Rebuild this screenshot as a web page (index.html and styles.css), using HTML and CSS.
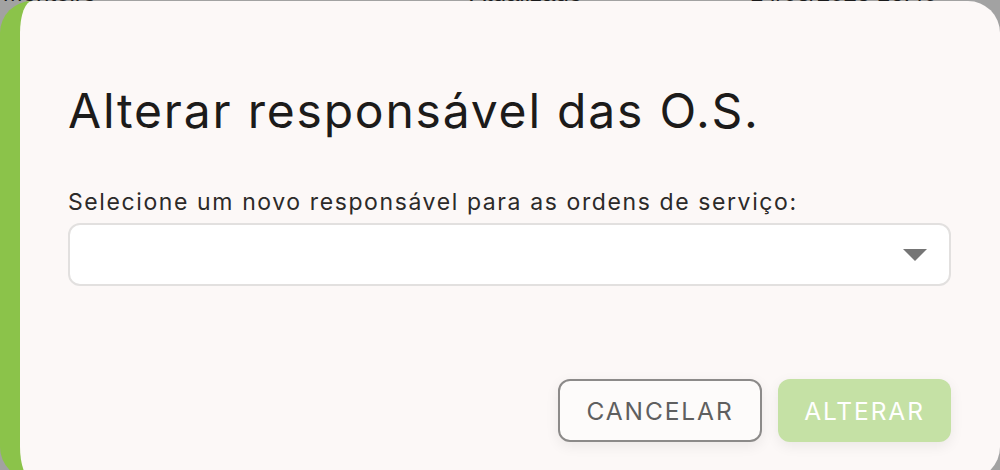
FILE: index.html
```html
<!DOCTYPE html>
<html lang="pt-BR">
<head>
<meta charset="utf-8">
<title>Alterar responsável das O.S.</title>
<link rel="stylesheet" href="styles.css">
</head>
<body>
<div class="backdrop">
  <div class="bg-row">
    <span class="bg-cell c1">Coelho Monteiro</span>
    <span class="bg-cell c2">Atualizado</span>
    <span class="bg-cell c3">14/08/2023 16:40</span>
  </div>
</div>
<div class="dialog" role="dialog" aria-labelledby="dlg-title">
  <h2 class="dialog-title" id="dlg-title">Alterar responsável das O.S.</h2>
  <label class="field-label" for="resp">Selecione um novo responsável para as ordens de serviço:</label>
  <div class="select" id="resp" tabindex="0">
    <span class="select-value"></span>
    <svg class="select-arrow" width="24" height="12" viewBox="0 0 24 12"><path d="M0 0 L24 0 L12 12 Z" fill="#757575"/></svg>
  </div>
  <div class="actions">
    <button class="btn btn-outline" type="button">CANCELAR</button>
    <button class="btn btn-primary" type="button" disabled>ALTERAR</button>
  </div>
</div>
</body>
</html>
```
FILE: styles.css
```css
html, body {
  margin: 0;
  padding: 0;
  width: 1000px;
  height: 470px;
  overflow: hidden;
}
body {
  background: #a2a2a2;
  font-family: "Inter", "Noto Sans", sans-serif;
  position: relative;
}
.backdrop {
  height: 470px;
}
.bg-row {
  display: flex;
  margin-top: -18px;
  font-family: "Liberation Sans", Arial, sans-serif;
  font-size: 24px;
  line-height: 22px;
  color: #1a1a1a;
}
.bg-cell { white-space: nowrap; }
.c1 { margin-left: -80px; width: 550px; }
.c2 { width: 280px; }
.dialog {
  position: absolute;
  left: 0;
  top: 1px;
  width: 1000px;
  height: 478px;
  box-sizing: border-box;
  background: #fcf8f7;
  border-left: 20px solid #8bc34a;
  border-radius: 32px;
  padding: 82px 49px 0 48px;
  display: flex;
  flex-direction: column;
}
.dialog-title {
  margin: 0;
  font-size: 48px;
  line-height: 56px;
  font-weight: 400;
  letter-spacing: 1.8px;
  color: #1c1b1a;
}
.field-label {
  margin-top: 49px;
  font-size: 23px;
  line-height: 28px;
  letter-spacing: 1.6px;
  color: #2c2a29;
}
.select {
  margin-top: 7px;
  height: 63px;
  box-sizing: border-box;
  border: 2px solid #e2e0df;
  border-radius: 12px;
  background: #ffffff;
  display: flex;
  align-items: center;
  justify-content: flex-end;
  padding-right: 22px;
}
.select-arrow { display: block; }
.actions {
  margin-top: 93px;
  display: flex;
  justify-content: flex-end;
  gap: 16px;
}
.btn {
  height: 63px;
  box-sizing: border-box;
  border-radius: 12px;
  font-family: "Inter", "Noto Sans", sans-serif;
  font-size: 24.5px;
  letter-spacing: 1.9px;
  font-weight: 400;
  padding: 0;
  box-shadow: 0 4px 14px rgba(0,0,0,0.07);
}
.btn-outline {
  width: 204px;
  background: #fdfbfa;
  border: 2px solid #8c8a89;
  color: #5f5f5f;
}
.btn-primary {
  width: 173px;
  background: #c5e1a5;
  border: none;
  color: #ffffff;
}
```
